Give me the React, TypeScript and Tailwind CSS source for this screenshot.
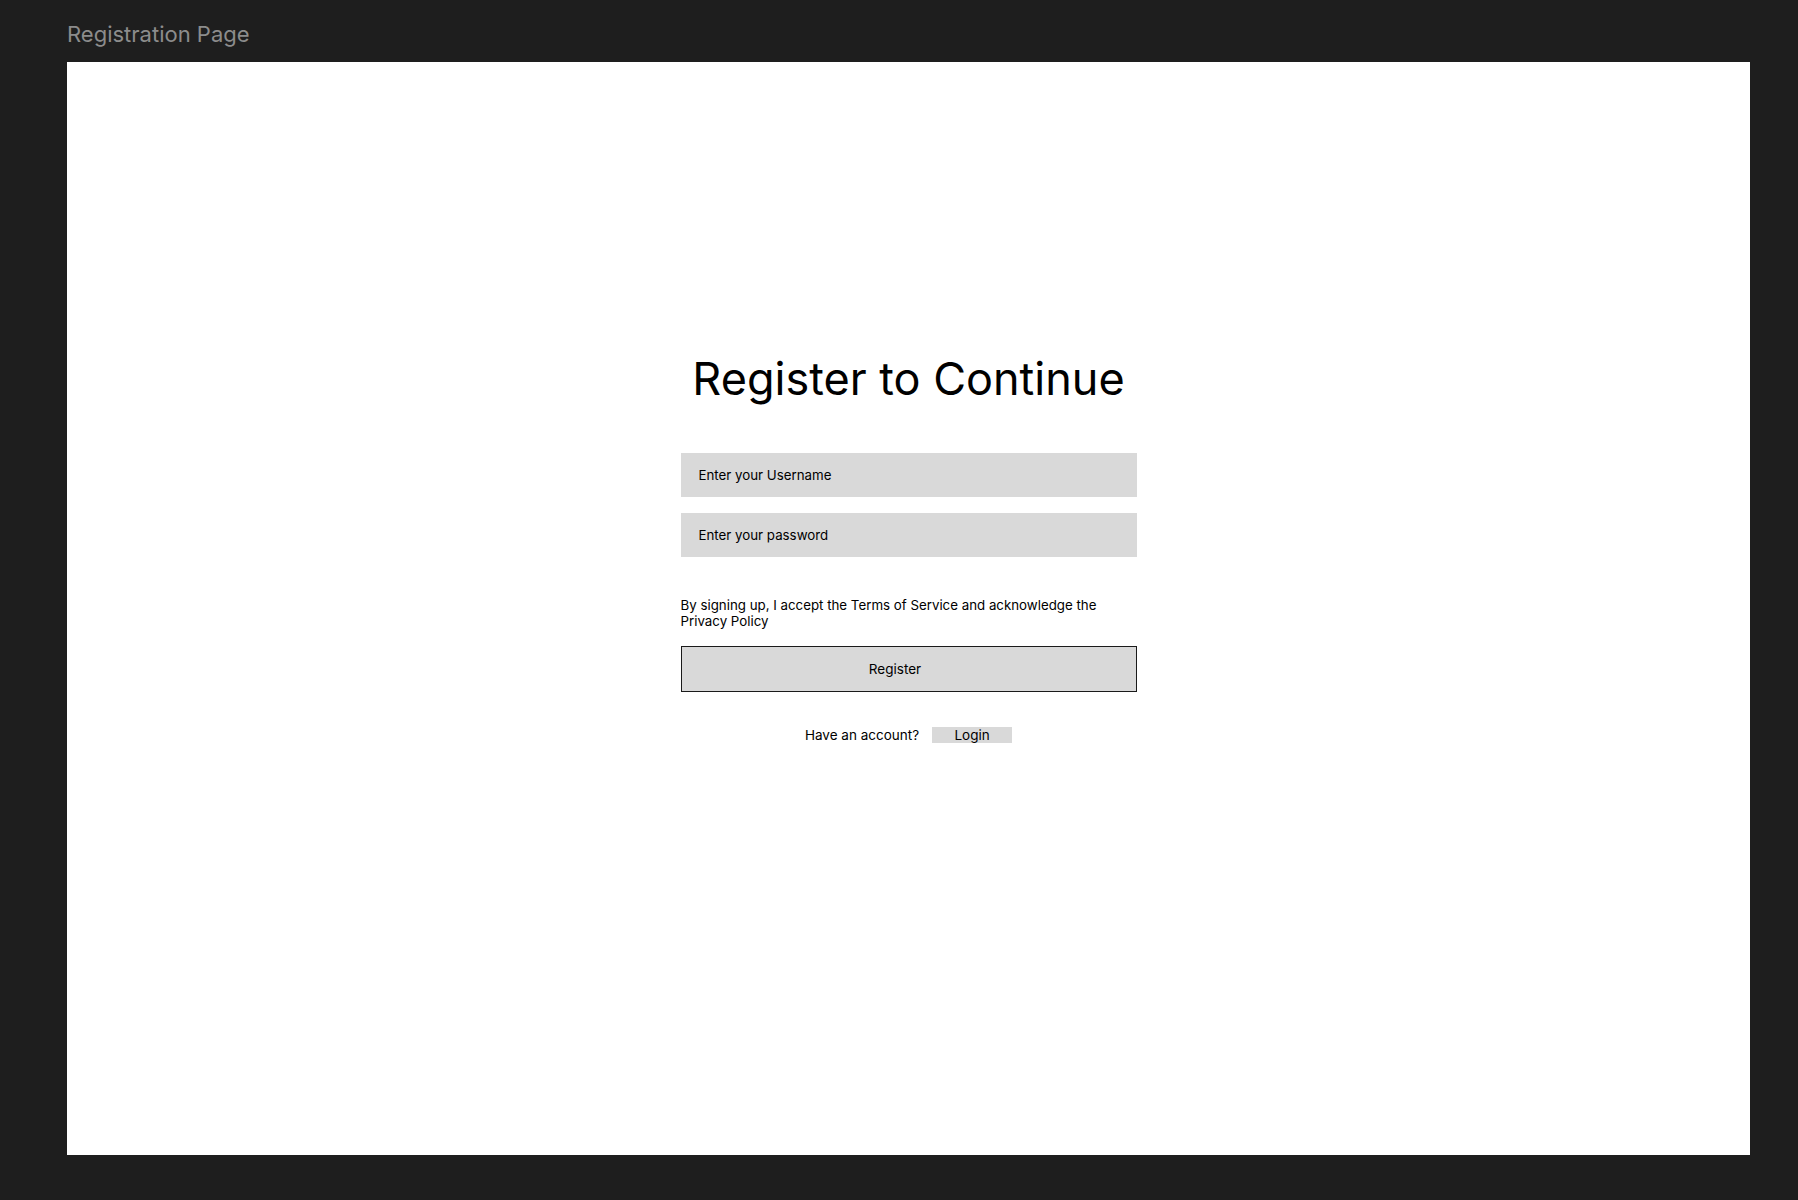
export default function App() {
  return (
    <div className="w-full h-[1200px] bg-[#1e1e1e] font-['Inter','Liberation_Sans',sans-serif] overflow-hidden">
      {/* Frame label */}
      <div className="h-[62px] pl-[67px] pt-[21px] text-[22px] leading-[26px] text-[#8c8c8c]">
        Registration Page
      </div>

      {/* Frame */}
      <div className="ml-[67px] w-[1683px] h-[1093px] bg-white flex flex-col items-center pt-[290px]">
        <h1 className="text-[45px] leading-[54px] text-black font-normal">Register to Continue</h1>

        <div className="w-[456px] mt-[47px] flex flex-col">
          <input
            className="h-[44px] bg-[#d9d9d9] pl-[18px] text-[13.3px] text-black placeholder:text-black outline-none"
            placeholder="Enter your Username"
          />
          <input
            type="password"
            className="h-[44px] mt-[16px] bg-[#d9d9d9] pl-[18px] text-[13.3px] text-black placeholder:text-black outline-none"
            placeholder="Enter your password"
          />

          <p className="mt-[40px] text-[13.3px] leading-[16px] text-black">
            By signing up, I accept the Terms of Service and acknowledge the Privacy Policy
          </p>

          <button
            type="button"
            className="mt-[17px] h-[46px] bg-[#d9d9d9] border border-[#1a1a1a] pr-[27px] text-[13.5px] text-black"
          >
            Register
          </button>

          <div className="mt-[33px] flex items-center justify-center gap-[13px]">
            <span className="text-[13.5px] text-black">Have an account?</span>
            <button type="button" className="w-[80px] h-[16px] bg-[#d9d9d9] text-[13.5px] leading-[16px] text-black">
              Login
            </button>
          </div>
        </div>
      </div>
    </div>
  );
}
